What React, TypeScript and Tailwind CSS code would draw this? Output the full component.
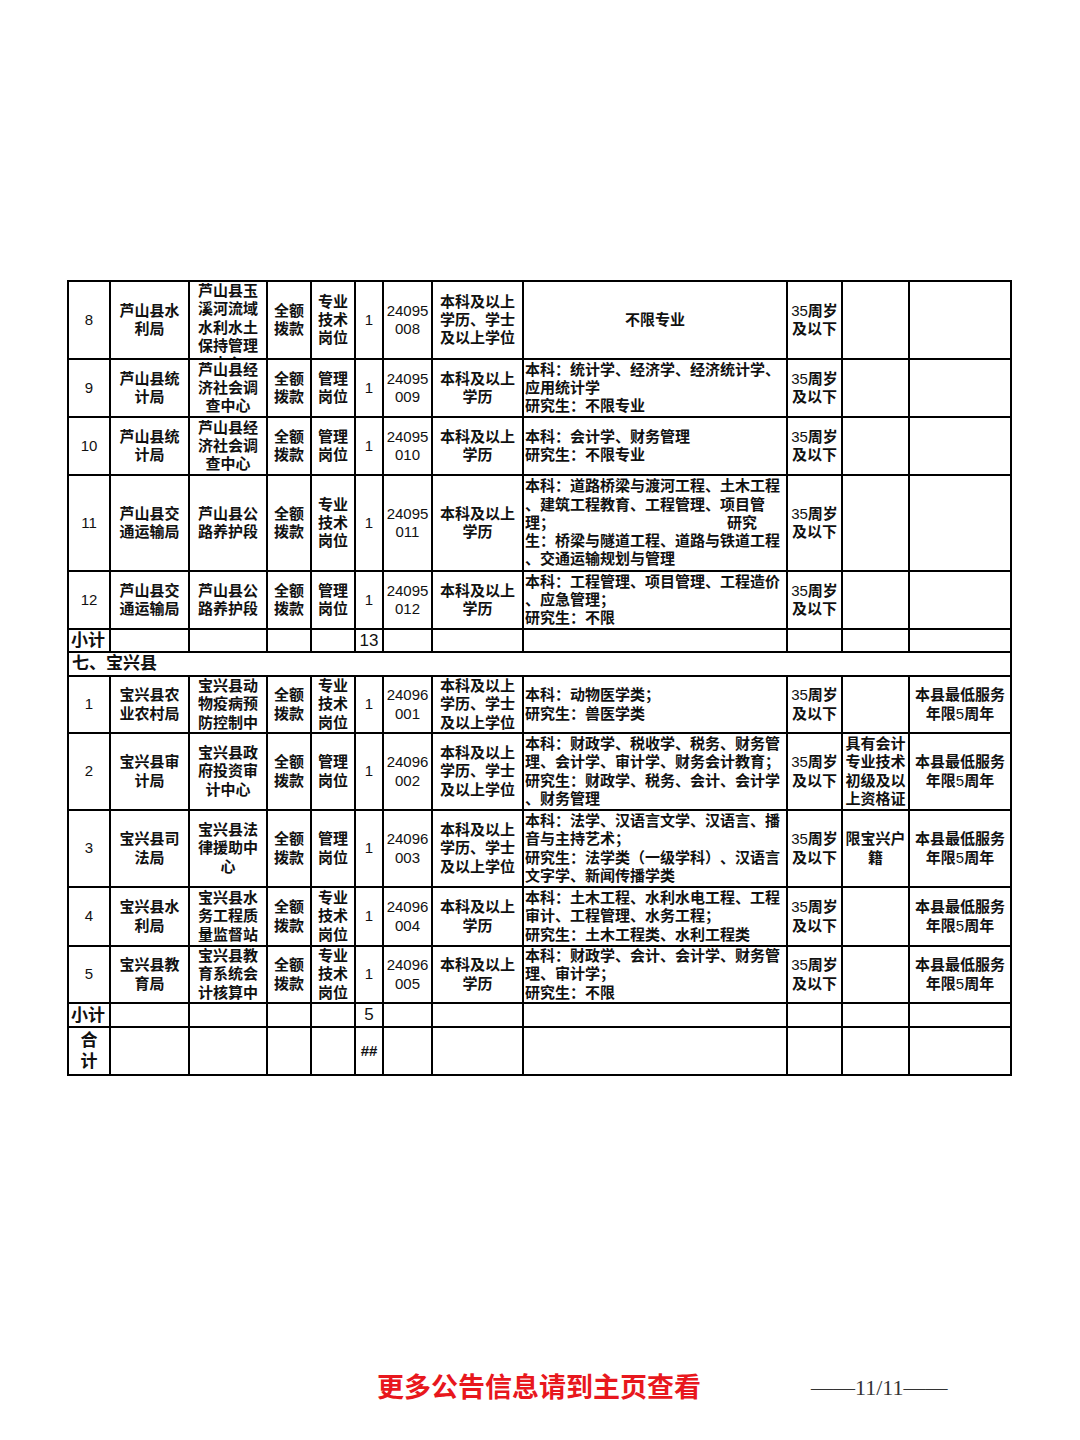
import React from "react";

// column tracks, each including its own 2px right border
const COLS =
  "grid grid-rows-1 grid-cols-[42px_79px_78px_44px_44px_28px_49px_91px_264px_55px_67px_102px]";

type Row = {
  h: string;
  cells: string[][];
  major: string[];
  majorCenter?: boolean;
};

const FT = "[font-family:'Liberation_Sans','Noto_Sans_CJK_SC',sans-serif]";

const age = ["35周岁", "及以下"];
const serve = ["本县最低服务", "年限5周年"];
const full = ["全额", "拨款"];
const tech = ["专业", "技术", "岗位"];
const mgmt = ["管理", "岗位"];
const bach = ["本科及以上", "学历"];
const bachDeg = ["本科及以上", "学历、学士", "及以上学位"];

const luRows: Row[] = [
  {
    h: "h-[78px]",
    cells: [["8"], ["芦山县水", "利局"], ["芦山县玉", "溪河流域", "水利水土", "保持管理", "中心"], full, tech, ["1"], ["24095", "008"], bachDeg],
    major: ["不限专业"],
    majorCenter: true,
  },
  {
    h: "h-[58px]",
    cells: [["9"], ["芦山县统", "计局"], ["芦山县经", "济社会调", "查中心"], full, mgmt, ["1"], ["24095", "009"], bach],
    major: ["本科：统计学、经济学、经济统计学、", "应用统计学", "研究生：不限专业"],
  },
  {
    h: "h-[58px]",
    cells: [["10"], ["芦山县统", "计局"], ["芦山县经", "济社会调", "查中心"], full, mgmt, ["1"], ["24095", "010"], bach],
    major: ["本科：会计学、财务管理", "研究生：不限专业"],
  },
  {
    h: "h-[96px]",
    cells: [["11"], ["芦山县交", "通运输局"], ["芦山县公", "路养护段"], full, tech, ["1"], ["24095", "011"], bach],
    major: ["本科：道路桥梁与渡河工程、土木工程", "、建筑工程教育、工程管理、项目管", "理；@研究", "生：桥梁与隧道工程、道路与铁道工程", "、交通运输规划与管理"],
  },
  {
    h: "h-[58px]",
    cells: [["12"], ["芦山县交", "通运输局"], ["芦山县公", "路养护段"], full, mgmt, ["1"], ["24095", "012"], bach],
    major: ["本科：工程管理、项目管理、工程造价", "、应急管理；", "研究生：不限"],
  },
];

const bxRows: (Row & { extra: string[][] })[] = [
  {
    h: "h-[57px]",
    cells: [["1"], ["宝兴县农", "业农村局"], ["宝兴县动", "物疫病预", "防控制中", "心"], full, tech, ["1"], ["24096", "001"], bachDeg],
    major: ["本科：动物医学类；", "研究生：兽医学类"],
    extra: [[], serve],
  },
  {
    h: "h-[77px]",
    cells: [["2"], ["宝兴县审", "计局"], ["宝兴县政", "府投资审", "计中心"], full, mgmt, ["1"], ["24096", "002"], bachDeg],
    major: ["本科：财政学、税收学、税务、财务管", "理、会计学、审计学、财务会计教育；", "研究生：财政学、税务、会计、会计学", "、财务管理"],
    extra: [["具有会计", "专业技术", "初级及以", "上资格证"], serve],
  },
  {
    h: "h-[77px]",
    cells: [["3"], ["宝兴县司", "法局"], ["宝兴县法", "律援助中", "心"], full, mgmt, ["1"], ["24096", "003"], bachDeg],
    major: ["本科：法学、汉语言文学、汉语言、播", "音与主持艺术；", "研究生：法学类（一级学科）、汉语言", "文字学、新闻传播学类"],
    extra: [["限宝兴户", "籍"], serve],
  },
  {
    h: "h-[59px]",
    cells: [["4"], ["宝兴县水", "利局"], ["宝兴县水", "务工程质", "量监督站"], full, tech, ["1"], ["24096", "004"], bach],
    major: ["本科：土木工程、水利水电工程、工程", "审计、工程管理、水务工程；", "研究生：土木工程类、水利工程类"],
    extra: [[], serve],
  },
  {
    h: "h-[57px]",
    cells: [["5"], ["宝兴县教", "育局"], ["宝兴县教", "育系统会", "计核算中", "心"], full, tech, ["1"], ["24096", "005"], bach],
    major: ["本科：财政学、会计、会计学、财务管", "理、审计学；", "研究生：不限"],
    extra: [[], serve],
  },
];

// digits stay regular weight, like the scan
function Txt({ s }: { s: string }) {
  const parts = s.split(/([0-9#]+)/);
  return (
    <>
      {parts.map((p, i) =>
        /^[0-9#]+$/.test(p) ? (
          <span key={i} className="font-normal">
            {p}
          </span>
        ) : (
          <span key={i}>{p}</span>
        )
      )}
    </>
  );
}

const CELL =
  "border-r-2 border-b-2 border-black overflow-hidden flex flex-col [justify-content:safe_center] leading-[18.3px] text-[15px] font-semibold [text-spacing-trim:space-all]";

function Cell({ lines }: { lines: string[] }) {
  return (
    <div className={`${CELL} items-center text-center`}>
      {lines.map((l, i) => (
        <div key={i} className="whitespace-nowrap">
          <Txt s={l} />
        </div>
      ))}
    </div>
  );
}

function Major({ lines, center }: { lines: string[]; center?: boolean }) {
  return (
    <div className={`${CELL} ${center ? "items-center" : "items-start pl-[1px]"}`}>
      {lines.map((l, i) => {
        if (l.includes("@")) {
          const [a, b] = l.split("@");
          return (
            <div key={i} className="flex whitespace-nowrap">
              <span>{a}</span>
              <span className="ml-[172px]">{b}</span>
            </div>
          );
        }
        return (
          <div key={i} className="whitespace-nowrap">
            {l}
          </div>
        );
      })}
    </div>
  );
}

function DataRow({ row, extra }: { row: Row; extra?: string[][] }) {
  const ex = extra ?? [[], []];
  return (
    <div className={`${COLS} ${row.h}`}>
      {row.cells.map((c, i) => (
        <Cell key={i} lines={c} />
      ))}
      <Major lines={row.major} center={row.majorCenter} />
      <Cell lines={age} />
      <Cell lines={ex[0]} />
      <Cell lines={ex[1]} />
    </div>
  );
}

function SumRow({ h, label, count }: { h: string; label: string[]; count: string }) {
  const blanks = Array.from({ length: 11 });
  return (
    <div className={`${COLS} ${h}`}>
      <div
        className={`border-r-2 border-b-2 border-black overflow-hidden flex flex-col justify-center text-[17px] leading-[21px] font-semibold ${
          label.length > 1 ? "items-center" : "items-start pl-[2px]"
        }`}
      >
        {label.map((l, i) => (
          <div key={i}>{l}</div>
        ))}
      </div>
      {blanks.map((_, i) =>
        i === 4 ? (
          <div
            key={i}
            className={`border-r-2 border-b-2 border-black overflow-hidden flex items-center justify-center ${
              count === "##" ? "text-[15px] font-bold" : "text-[17px] font-normal"
            }`}
          >
            {count}
          </div>
        ) : (
          <div key={i} className="border-r-2 border-b-2 border-black" />
        )
      )}
    </div>
  );
}

export default function App() {
  return (
    <div className={`w-[1080px] h-[1440px] bg-white text-[#111] ${FT} flex flex-col`}>
      <div className="pt-[280px] pl-[67px]">
        <div className="w-[945px] border-l-2 border-t-2 border-black">
          {luRows.map((r, i) => (
            <DataRow key={i} row={r} />
          ))}
          <SumRow h="h-[23px]" label={["小计"]} count="13" />
          <div className="h-[24px] border-r-2 border-b-2 border-black flex items-center pl-[3px] text-[17px] font-semibold">
            七、宝兴县
          </div>
          {bxRows.map((r, i) => (
            <DataRow key={i} row={r} extra={r.extra} />
          ))}
          <SumRow h="h-[24px]" label={["小计"]} count="5" />
          <SumRow h="h-[48px]" label={["合", "计"]} count="##" />
        </div>
      </div>

      <div className="mt-[291px] h-[36px] flex items-center">
        <span className="ml-[377px] text-[27px] font-bold text-[#e8171d] [font-family:'Noto_Sans_CJK_SC',sans-serif] leading-none">
          更多公告信息请到主页查看
        </span>
        <span className="ml-[110px] mt-[6px] text-[22px] text-[#333] [font-family:'Liberation_Serif',serif] leading-none">
          ——11/11——
        </span>
      </div>
    </div>
  );
}
